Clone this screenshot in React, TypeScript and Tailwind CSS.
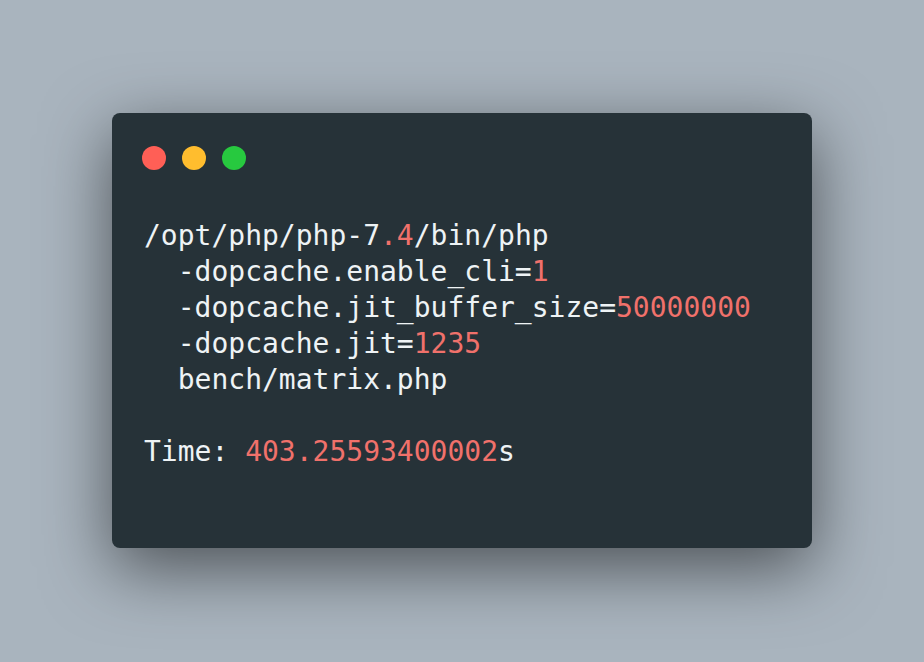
const num = "text-[#f0716b]";

function Line({ children, indent = false }: { children: React.ReactNode; indent?: boolean }) {
  return <div className="h-[36px] whitespace-pre">{indent ? "  " : ""}{children}</div>;
}

export default function App() {
  return (
    <div className="w-[924px] h-[662px] bg-[#a9b4be] pt-[113px] pl-[112px] overflow-hidden">
      <div className="w-[700px] h-[435px] rounded-[8px] bg-[#263238] shadow-[0_20px_68px_rgba(0,0,0,0.55)] pt-[33px] px-[30px]">
        <div className="flex gap-[16px]">
          <span className="w-[24px] h-[24px] rounded-full bg-[#ff5f56]" />
          <span className="w-[24px] h-[24px] rounded-full bg-[#ffbd2e]" />
          <span className="w-[24px] h-[24px] rounded-full bg-[#27c93f]" />
        </div>
        <div
          className="mt-[48px] pl-[2px] text-[28px] leading-[36px] text-[#eef3f5]"
          style={{ fontFamily: '"DejaVu Sans Mono", "Liberation Mono", monospace' }}
        >
          <Line>
            /opt/php/php-7<span className={num}>.4</span>/bin/php
          </Line>
          <Line indent>
            -dopcache.enable_cli=<span className={num}>1</span>
          </Line>
          <Line indent>
            -dopcache.jit_buffer_size=<span className={num}>50000000</span>
          </Line>
          <Line indent>
            -dopcache.jit=<span className={num}>1235</span>
          </Line>
          <Line indent>bench/matrix.php</Line>
          <Line> </Line>
          <Line>
            Time: <span className={num}>403.25593400002</span>s
          </Line>
        </div>
      </div>
    </div>
  );
}
